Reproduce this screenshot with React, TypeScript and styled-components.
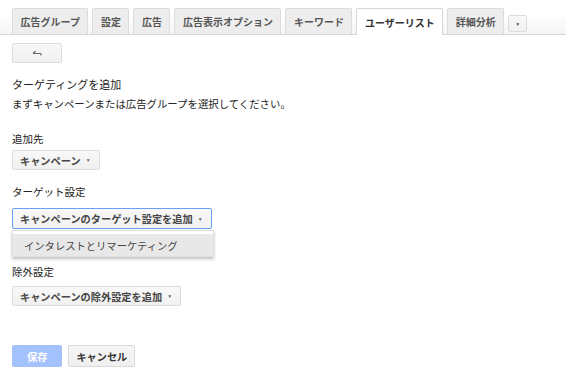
import styled, { createGlobalStyle } from 'styled-components';

const GlobalStyle = createGlobalStyle`
    html, body {
        margin: 0;
        padding: 0;
        background: #fff;
    }
    body {
        font-family: 'Liberation Sans', 'Noto Sans CJK JP', sans-serif;
        color: #222;
    }
`

const TabBar = styled.div`
    display: flex;
    align-items: flex-end;
    gap: 4px;
    height: 34px;
    padding-left: 12px;
    border-bottom: 1px solid #d6d6d6;
    background: linear-gradient(to bottom, #fff 0%, #fff 40%, #f4f4f4 100%);
`
const Tab = styled.div<{ $active?: boolean }>`
    padding: 0 7.5px;
    display: flex;
    align-items: center;
    box-sizing: border-box;
    font-size: 10px;
    font-weight: bold;
    color: ${({ $active }) => ($active ? '#333' : '#555')};
    background: ${({ $active }) => ($active ? '#fff' : '#ededed')};
    border: 1px solid ${({ $active }) => ($active ? '#d6d6d6' : '#dcdcdc')};
    border-bottom: none;
    margin-bottom: ${({ $active }) => ($active ? '-1px' : '0')};
    height: ${({ $active }) => ($active ? '27px' : '26px')};
    border-radius: 2px 2px 0 0;
`
const TabMore = styled.div`
    width: 19px;
    height: 17px;
    margin: 0 0 2px 0;
    box-sizing: border-box;
    border: 1px solid #dcdcdc;
    border-radius: 2px;
    background: linear-gradient(#f8f8f8, #f1f1f1);
    display: flex;
    align-items: center;
    justify-content: center;
    font-size: 5px;
    color: #555;
`
const Content = styled.div`
    padding: 8px 12px 0;
`
const BackButton = styled.div`
    width: 50px;
    height: 20px;
    box-sizing: border-box;
    border: 1px solid #dcdcdc;
    border-radius: 2px;
    background: linear-gradient(#f8f8f8, #f1f1f1);
    display: flex;
    align-items: center;
    justify-content: center;
    color: #555;
`
const Heading = styled.div`
    margin-top: 15px;
    font-size: 11px;
    line-height: 14px;
    color: #222;
`
const Note = styled.div`
    margin-top: 6px;
    font-size: 10.4px;
    line-height: 14px;
    color: #222;
`
const Label = styled.div<{ $top: number }>`
    margin-top: ${({ $top }) => $top}px;
    font-size: 10.5px;
    line-height: 14px;
    color: #222;
`
const Menu = styled.div`
    position: relative;
    display: inline-block;
`
const DropButton = styled.div<{ $focused?: boolean }>`
    display: inline-flex;
    align-items: center;
    gap: 5px;
    height: ${({ $focused }) => ($focused ? '21px' : '20px')};
    padding: 0 7px 0 7px;
    box-sizing: border-box;
    border: 1px solid ${({ $focused }) => ($focused ? '#6d9ef5' : '#dcdcdc')};
    border-radius: 2px;
    background: linear-gradient(#f8f8f8, #f1f1f1);
    font-size: 10.2px;
    font-weight: bold;
    color: #444;
    white-space: nowrap;
`
const Caret = styled.span`
    font-size: 5px;
    color: #666;
    font-weight: normal;
    padding-right: 1px;
`
const Popup = styled.div`
    position: absolute;
    top: 22px;
    left: 0;
    width: 202px;
    box-sizing: border-box;
    padding-top: 3px;
    background: #fff;
    border: 1px solid #e0e0e0;
    box-shadow: 0 2px 3px rgba(0, 0, 0, 0.25);
`
const PopupItem = styled.div`
    height: 22px;
    display: flex;
    align-items: center;
    padding-left: 11px;
    background: #e8e8e8;
    font-size: 10.3px;
    color: #444;
`
const Row = styled.div<{ $top: number }>`
    margin-top: ${({ $top }) => $top}px;
`
const Actions = styled.div`
    margin-top: 39px;
    display: flex;
    gap: 6px;
`
const ActionButton = styled.div<{ $primary?: boolean }>`
    height: 22px;
    padding: 0 ${({ $primary }) => ($primary ? '14px' : '7px')};
    min-width: 50px;
    box-sizing: border-box;
    display: flex;
    align-items: center;
    justify-content: center;
    border-radius: 2px;
    font-size: 10.2px;
    font-weight: bold;
    color: ${({ $primary }) => ($primary ? '#fff' : '#333')};
    background: ${({ $primary }) => ($primary ? '#a3c1fc' : 'linear-gradient(#f6f6f6, #efefef)')};
    border: 1px solid ${({ $primary }) => ($primary ? '#a3c1fc' : '#d9d9d9')};
`

const tabs = ['広告グループ', '設定', '広告', '広告表示オプション', 'キーワード', 'ユーザーリスト', '詳細分析'];

export default function App(): JSX.Element {
    return (
        <>
            <GlobalStyle />
            <TabBar>
                {tabs.map((t) => (<Tab key={t} $active={t === 'ユーザーリスト'}>{t}</Tab>))}
                <TabMore>▼</TabMore>
            </TabBar>
            <Content>
                <BackButton>
                    <svg width="10" height="7" viewBox="0 0 10 7">
                        <path d="M1 3.5 H9 M1 3.5 L3.5 1 M9 3.5 V5.5" stroke="#666" strokeWidth="1.2" fill="none" />
                    </svg>
                </BackButton>
                <Heading>ターゲティングを追加</Heading>
                <Note>まずキャンペーンまたは広告グループを選択してください。</Note>
                <Label $top={20}>追加先</Label>
                <Row $top={4}>
                    <DropButton>キャンペーン<Caret>▼</Caret></DropButton>
                </Row>
                <Label $top={15}>ターゲット設定</Label>
                <Row $top={9}>
                    <Menu>
                        <DropButton $focused>キャンペーンのターゲット設定を追加<Caret>▼</Caret></DropButton>
                        <Popup>
                            <PopupItem>インタレストとリマーケティング</PopupItem>
                        </Popup>
                    </Menu>
                </Row>
                <Label $top={36}>除外設定</Label>
                <Row $top={7}>
                    <DropButton>キャンペーンの除外設定を追加<Caret>▼</Caret></DropButton>
                </Row>
                <Actions>
                    <ActionButton $primary>保存</ActionButton>
                    <ActionButton>キャンセル</ActionButton>
                </Actions>
            </Content>
        </>
    )
}
